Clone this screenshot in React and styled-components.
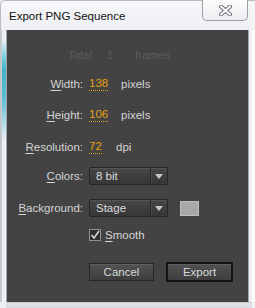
import React from 'react';
import styled, { createGlobalStyle } from 'styled-components';

const Global = createGlobalStyle`
  html, body { margin: 0; padding: 0; background: #ffffff; }
  * { box-sizing: border-box; }
`;

const Window = styled.div`
  width: 255px;
  height: 308px;
  display: flex;
  flex-direction: column;
  background: #eef0f3;
  font-family: "Liberation Sans", Arial, sans-serif;
  overflow: hidden;
`;

const TitleBar = styled.div`
  height: 30px;
  display: flex;
  align-items: flex-start;
  justify-content: space-between;
  padding-left: 8px;
  border-left: 1px solid #b9bcc0;
  border-top: 1px solid #b9bcc0;
  border-top-left-radius: 5px;
  background: linear-gradient(#f6f7f9, #eef0f3);
`;

const Title = styled.div`
  font-size: 11.5px;
  color: #111;
  margin-top: 9px;
`;

const CloseButton = styled.div`
  width: 46px;
  height: 21px;
  margin-top: -1px;
  margin-right: 7px;
  border: 1px solid #9a9ea4;
  border-top: none;
  border-radius: 0 0 5px 5px;
  background: linear-gradient(#fdfdfd, #eceef1);
  display: flex;
  align-items: center;
  justify-content: center;
`;

const Middle = styled.div`
  flex: 1;
  display: flex;
`;

const SideFrame = styled.div`
  width: 7px;
  display: flex;
  border-left: ${p => (p.$left ? '2px solid #c4c7cb' : 'none')};
  border-right: ${p => (p.$left ? 'none' : '3px solid #ffffff')};
`;

const Glow = styled.div`
  flex: 1;
  background: ${p => (p.$left
    ? 'linear-gradient(#eef0f3 0px, #eef0f3 10px, #7fd3e2 26px, #3fb2c8 40px, #5fc1d4 70px, #eef0f3 110px)'
    : '#eef0f3')};
  border-right: ${p => (p.$left ? '1px solid #a3a6aa' : 'none')};
  border-left: ${p => (p.$left ? 'none' : '1px solid #a3a6aa')};
`;

const Panel = styled.div`
  flex: 1;
  background: #434343;
  display: flex;
  flex-direction: column;
  padding-top: 15px;
  font-size: 11.5px;
  color: #d4d4d4;
`;

const BottomFrame = styled.div`
  height: 6px;
  margin: 0 3px 0 6px;
  border-top: 1px solid #c9ccd0;
  background: linear-gradient(#e2e5e9, #d6dadf);
`;

const Row = styled.div`
  height: 20px;
  margin-top: ${p => p.$mt || 0}px;
  display: grid;
  grid-template-columns: 76px 1fr;
  column-gap: 6px;
  align-items: center;
`;

const TotalRow = styled.div`
  height: 20px;
  display: flex;
  align-items: center;
  padding-left: 61px;
  color: #5d5d5d;
`;

const TotalPart = styled.span`
  width: ${p => p.$w}px;
`;

const Label = styled.div`
  text-align: right;
  white-space: nowrap;
  u { text-decoration: underline; text-underline-offset: 2px; }
`;

const Controls = styled.div`
  display: flex;
  align-items: center;
`;

const Value = styled.span`
  color: #e9a012;
  border-bottom: 1px dotted #e9a012;
  line-height: 13px;
  width: ${p => p.$w}px;
  margin-right: ${p => p.$gap}px;
`;

const Select = styled.div`
  width: 79px;
  height: 18px;
  display: flex;
  border: 1px solid #262626;
  border-radius: 2px;
  background: linear-gradient(#474747, #363636);
  box-shadow: inset 0 1px 0 #555;
  color: #dcdcdc;
`;

const SelectText = styled.div`
  flex: 1;
  padding-left: 6px;
  display: flex;
  align-items: center;
`;

const SelectArrow = styled.div`
  width: 17px;
  border-left: 1px solid #262626;
  box-shadow: inset 1px 0 0 #4d4d4d;
  display: flex;
  align-items: center;
  justify-content: center;
  &::after {
    content: '';
    border-left: 4px solid transparent;
    border-right: 4px solid transparent;
    border-top: 5px solid #c9c9c9;
  }
`;

const Swatch = styled.div`
  width: 19px;
  height: 15px;
  margin-left: 12px;
  background: #a8a8a8;
  border: 1px solid #bdbdbd;
`;

const Check = styled.div`
  width: 12px;
  height: 12px;
  border: 1px solid #8e8e8e;
  background: #2f2f2f;
  display: flex;
  align-items: center;
  justify-content: center;
  margin-right: 4px;
`;

const ButtonRow = styled.div`
  margin-top: 17px;
  padding-left: 82px;
  display: flex;
  align-items: center;
  gap: 12px;
`;

const Button = styled.div`
  width: ${p => (p.$default ? 67 : 65)}px;
  height: ${p => (p.$default ? 20 : 18)}px;
  display: flex;
  align-items: center;
  justify-content: center;
  border: ${p => (p.$default ? '2px solid #141414' : '1px solid #262626')};
  background: linear-gradient(#525252, #3d3d3d);
  box-shadow: inset 0 1px 0 #5e5e5e;
  color: #d8d8d8;
`;

const CloseIcon = () => (
  <svg width="13" height="11" viewBox="0 0 13 11">
    <path d="M2 1.5 L11 9.5 M11 1.5 L2 9.5" stroke="#6d7178" strokeWidth="4" strokeLinecap="round" />
    <path d="M2 1.5 L11 9.5 M11 1.5 L2 9.5" stroke="#ffffff" strokeWidth="2" strokeLinecap="round" />
  </svg>
);

const CheckMark = () => (
  <svg width="10" height="10" viewBox="0 0 10 10">
    <path d="M1.5 5 L4 8 L9 1" stroke="#d8d8d8" strokeWidth="1.6" fill="none" />
  </svg>
);

const App = () => (
  <Window>
    <Global />
    <TitleBar>
      <Title>Export PNG Sequence</Title>
      <CloseButton><CloseIcon /></CloseButton>
    </TitleBar>
    <Middle>
      <SideFrame $left><Glow $left /></SideFrame>
      <Panel>
        <TotalRow>
          <TotalPart $w={39}>Total</TotalPart>
          <TotalPart $w={28}>1</TotalPart>
          <span>frames</span>
        </TotalRow>
        <Row $mt={9}>
          <Label><u>W</u>idth:</Label>
          <Controls><Value $w={19} $gap={13}>138</Value>pixels</Controls>
        </Row>
        <Row $mt={11}>
          <Label><u>H</u>eight:</Label>
          <Controls><Value $w={19} $gap={13}>106</Value>pixels</Controls>
        </Row>
        <Row $mt={12}>
          <Label><u>R</u>esolution:</Label>
          <Controls><Value $w={13} $gap={14}>72</Value>dpi</Controls>
        </Row>
        <Row $mt={9}>
          <Label><u>C</u>olors:</Label>
          <Controls>
            <Select><SelectText>8 bit</SelectText><SelectArrow /></Select>
          </Controls>
        </Row>
        <Row $mt={12}>
          <Label><u>B</u>ackground:</Label>
          <Controls>
            <Select><SelectText>Stage</SelectText><SelectArrow /></Select>
            <Swatch />
          </Controls>
        </Row>
        <Row $mt={7}>
          <span />
          <Controls>
            <Check><CheckMark /></Check>
            <Label><u>S</u>mooth</Label>
          </Controls>
        </Row>
        <ButtonRow>
          <Button>Cancel</Button>
          <Button $default>Export</Button>
        </ButtonRow>
      </Panel>
      <SideFrame><Glow /></SideFrame>
    </Middle>
    <BottomFrame />
  </Window>
);

export default App;
